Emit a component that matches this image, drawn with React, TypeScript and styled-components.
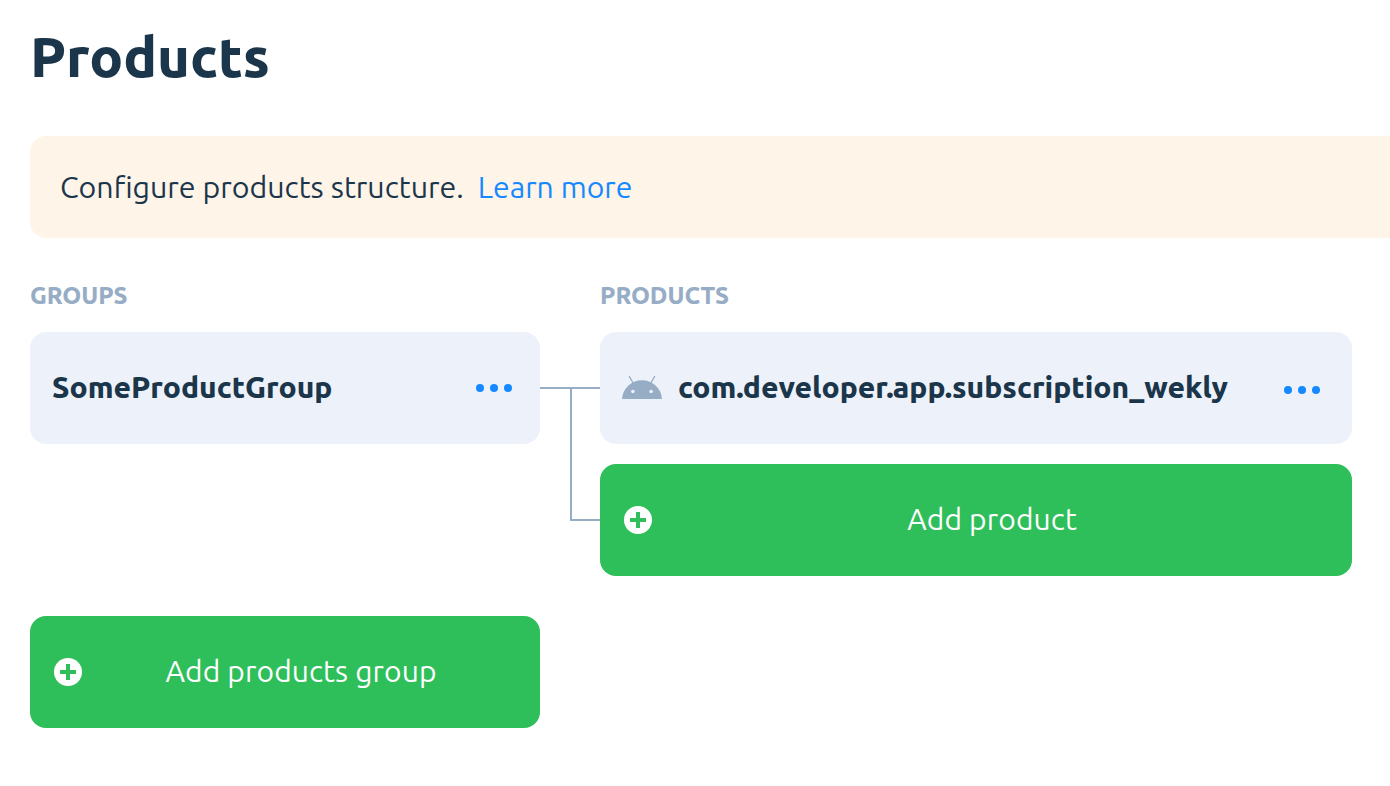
import React from 'react';
import styled, { createGlobalStyle } from 'styled-components';

const colors = {
  ink: '#1b364b',
  blue: '#1589ff',
  muted: '#97adc6',
  card: '#edf2fa',
  banner: '#fff4e8',
  green: '#2ebe5a',
};

const GlobalStyle = createGlobalStyle`
  *, *::before, *::after { box-sizing: border-box; }
  body {
    margin: 0;
    background: #fff;
    color: ${colors.ink};
    font-family: "Ubuntu", "Noto Sans", sans-serif;
    font-size: 30px;
    overflow: hidden;
  }
`;

const Page = styled.main`
  display: flex;
  flex-direction: column;
  min-height: 786px;
  padding-left: 30px;
`;

const Title = styled.h1`
  margin: 0;
  font-size: 56px;
  font-weight: 800;
  line-height: 114px;
`;

const Banner = styled.section`
  display: flex;
  align-items: center;
  gap: 14px;
  height: 102px;
  margin-top: 22px;
  padding-left: 30px;
  border-radius: 16px 0 0 16px;
  background: ${colors.banner};
  font-size: 30.35px;
`;

const Link = styled.a`
  color: ${colors.blue};
  font-size: 30.15px;
  text-decoration: none;
`;

const Board = styled.section`
  display: grid;
  grid-template-columns: 510px 60px 752px;
  margin-top: 42px;
`;

const Label = styled.h2`
  margin: 0 0 20px;
  color: ${colors.muted};
  font-size: 24px;
  font-weight: 800;
  line-height: 32px;
  letter-spacing: -0.05px;
`;

const Column = styled.div`
  display: flex;
  flex-direction: column;
`;

const Card = styled.div<{ $right: number }>`
  display: flex;
  align-items: center;
  height: 112px;
  padding: 0 ${(p) => p.$right}px 0 22px;
  border-radius: 16px;
  background: ${colors.card};
`;

const Name = styled.span`
  flex: 1;
  padding-bottom: 2px;
  font-weight: 800;
  white-space: nowrap;
`;

const Menu = styled.button<{ $drop?: number }>`
  display: flex;
  gap: 6px;
  margin: ${(p) => p.$drop ?? 0}px 0 0;
  padding: 0;
  border: 0;
  background: none;
`;

const Dot = styled.span`
  width: 8px;
  height: 8px;
  border-radius: 50%;
  background: ${colors.blue};
`;

const Connector = styled.div`
  padding-top: 107px;
`;

const Trunk = styled.div`
  height: 2px;
  background: ${colors.muted};
`;

const Branch = styled.div`
  height: 132px;
  margin-left: 30px;
  border: solid ${colors.muted};
  border-width: 0 0 2px 2px;
`;

const AddButton = styled.button<{ $top: number; $width: number }>`
  display: flex;
  align-items: center;
  width: ${(p) => p.$width}px;
  height: 112px;
  margin: ${(p) => p.$top}px 0 0;
  padding: 0 20px 0 24px;
  border: 0;
  border-radius: 16px;
  background: ${colors.green};
  color: #fff;
  font: inherit;
  letter-spacing: 0.12px;
`;

const ButtonText = styled.span`
  flex: 1;
  padding-bottom: 2px;
  text-align: center;
`;

const AndroidSvg = styled.svg`
  flex: none;
  margin-right: 16px;
`;

function PlusIcon() {
  return (
    <svg width="28" height="28" viewBox="0 0 28 28">
      <circle cx="14" cy="14" r="14" fill="#fff" />
      <path d="M12 6h4v6h6v4h-6v6h-4v-6H6v-4h6z" fill={colors.green} />
    </svg>
  );
}

function AndroidIcon() {
  return (
    <AndroidSvg width="40" height="24" viewBox="0 0 40 24">
      <path d="M7.4.5l4 7M32.6.5l-4 7" stroke={colors.muted} strokeWidth="1.4" strokeLinecap="round" />
      <path d="M0 23C.7 12.5 9 4.3 20 4.3S39.3 12.5 40 23z" fill={colors.muted} />
      <circle cx="10.9" cy="15.5" r="1.8" fill={colors.card} />
      <circle cx="29.1" cy="15.5" r="1.8" fill={colors.card} />
    </AndroidSvg>
  );
}

function MoreMenu({ drop }: { drop?: number }) {
  return (
    <Menu $drop={drop} aria-label="More">
      <Dot />
      <Dot />
      <Dot />
    </Menu>
  );
}

export default function App() {
  return (
    <>
      <GlobalStyle />
      <Page>
        <Title>Products</Title>
        <Banner>
          <span>Configure products structure.</span>
          <Link>Learn more</Link>
        </Banner>
        <Board>
          <Column>
            <Label>GROUPS</Label>
            <Card $right={28}>
              <Name>SomeProductGroup</Name>
              <MoreMenu />
            </Card>
          </Column>
          <Connector>
            <Trunk />
            <Branch />
          </Connector>
          <Column>
            <Label>PRODUCTS</Label>
            <Card $right={32}>
              <AndroidIcon />
              <Name>com.developer.app.subscription_wekly</Name>
              <MoreMenu drop={4} />
            </Card>
            <AddButton $top={20} $width={752}>
              <PlusIcon />
              <ButtonText>Add product</ButtonText>
            </AddButton>
          </Column>
        </Board>
        <AddButton $top={40} $width={510}>
          <PlusIcon />
          <ButtonText>Add products group</ButtonText>
        </AddButton>
      </Page>
    </>
  );
}
